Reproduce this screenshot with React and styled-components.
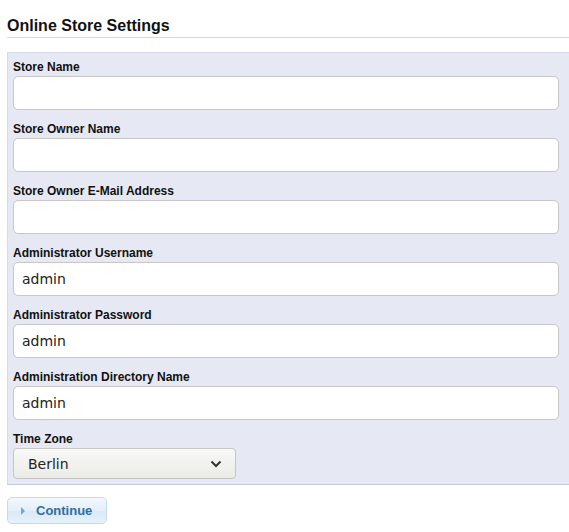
import React from "react";
import styled, { createGlobalStyle } from "styled-components";

const Global = createGlobalStyle`
  html, body { margin: 0; padding: 0; background: #fff; }
  body { font-family: "Liberation Sans", Arial, sans-serif; color: #000; }
`;

const Page = styled.div`
  padding: 16px 0 0 7px;
  width: 562px;
`;

const Heading = styled.h2`
  margin: 0;
  font-size: 16px;
  font-weight: bold;
  line-height: 20px;
  padding-bottom: 1px;
  border-bottom: 1px solid #dcdcdc;
  color: #111;
`;

const Panel = styled.div`
  margin-top: 14px;
  background: #e6e8f4;
  border: 1px solid #d6d9ec;
  border-bottom-color: #c2c6e4;
  border-right: none;
  padding: 4px 10px 5px 5px;
  display: flex;
  flex-direction: column;
`;

const Field = styled.div`
  display: flex;
  flex-direction: column;
  padding-bottom: 9px;
  &:last-child { padding-bottom: 0; }
`;

const Label = styled.label`
  font-size: 12px;
  font-weight: bold;
  line-height: 18px;
  padding-top: 1px;
  color: #111;
`;

const Input = styled.input`
  box-sizing: border-box;
  height: 34px;
  width: 100%;
  margin: 0;
  border: 1px solid #c9c6c4;
  border-radius: 5px;
  background: #fff;
  padding: 0 8px;
  font-family: "DejaVu Sans", Verdana, sans-serif;
  font-size: 14px;
  color: #222;
  outline: none;
`;

const SelectBox = styled.div`
  box-sizing: border-box;
  width: 223px;
  height: 31px;
  border: 1px solid #c8c6c2;
  border-radius: 4px;
  background: linear-gradient(#f8f8f6, #ebebe8);
  display: flex;
  align-items: center;
  justify-content: space-between;
  padding: 0 13px 0 14px;
  font-family: "DejaVu Sans", Verdana, sans-serif;
  font-size: 14px;
  color: #222;
`;

const Chevron = styled.svg`
  width: 12px;
  height: 8px;
`;

const Button = styled.button`
  margin-top: 12px;
  box-sizing: border-box;
  width: 100px;
  height: 27px;
  border: 1px solid #c5dbec;
  border-radius: 5px;
  background: linear-gradient(#f2f8fd 0%, #e3eff9 50%, #d9e9f7 51%, #e6f1fa 100%);
  display: flex;
  align-items: center;
  gap: 11px;
  padding: 0 0 0 13px;
  font-family: "Liberation Sans", Arial, sans-serif;
  font-size: 13px;
  font-weight: bold;
  color: #2e6e9e;
  cursor: pointer;
`;

const Triangle = styled.span`
  width: 0;
  height: 0;
  border-top: 4px solid transparent;
  border-bottom: 4px solid transparent;
  border-left: 4px solid #6da8d6;
`;

const fields = [
  { label: "Store Name", value: "" },
  { label: "Store Owner Name", value: "" },
  { label: "Store Owner E-Mail Address", value: "" },
  { label: "Administrator Username", value: "admin" },
  { label: "Administrator Password", value: "admin" },
  { label: "Administration Directory Name", value: "admin" },
];

export default function App() {
  return (
    <>
      <Global />
      <Page>
        <Heading>Online Store Settings</Heading>
        <Panel>
          {fields.map((f) => (
            <Field key={f.label}>
              <Label>{f.label}</Label>
              <Input defaultValue={f.value} />
            </Field>
          ))}
          <Field>
            <Label>Time Zone</Label>
            <SelectBox>
              <span>Berlin</span>
              <Chevron viewBox="0 0 12 8">
                <path d="M1.5 1.5 L6 6 L10.5 1.5" fill="none" stroke="#333" strokeWidth="2" />
              </Chevron>
            </SelectBox>
          </Field>
        </Panel>
        <Button>
          <Triangle />
          Continue
        </Button>
      </Page>
    </>
  );
}
